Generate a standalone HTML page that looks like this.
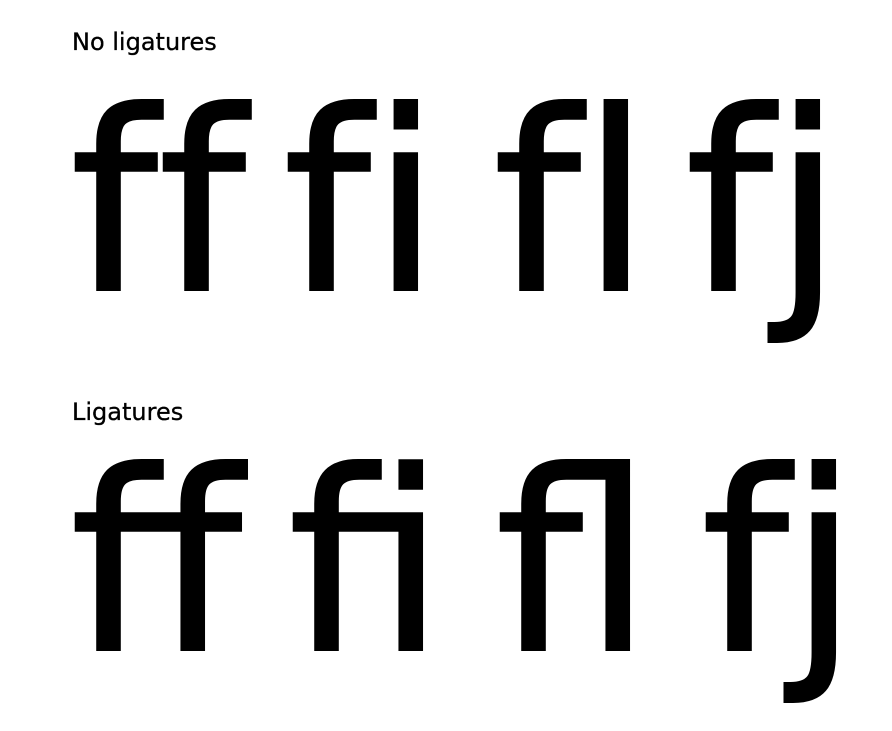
<!DOCTYPE html>
<html><head><meta charset="utf-8"><style>
html,body{margin:0;padding:0;background:#fff;width:892px;height:731px;overflow:hidden;position:relative}
.l{position:absolute;font-family:"DejaVu Sans","Liberation Sans",sans-serif;font-size:24px;font-weight:500;line-height:1;color:#000;left:72px;-webkit-text-stroke:0.3px #000}
.g{position:absolute;font-family:"DejaVu Sans","Liberation Sans",sans-serif;font-size:250px;line-height:1;color:#000;white-space:nowrap;-webkit-text-stroke:2px #000}
.n{font-variant-ligatures:none;font-feature-settings:"liga" 0}
.y{font-variant-ligatures:common-ligatures;font-feature-settings:"liga" 1}
</style></head><body>
<div class="l" style="top:30px">No ligatures</div>
<div class="g n" style="top:79px;left:70px">ff</div>
<div class="g n" style="top:79px;left:283px">fi</div>
<div class="g n" style="top:79px;left:493px">fl</div>
<div class="g n" style="top:79px;left:685px">fj</div>
<div class="l" style="top:400px">Ligatures</div>
<div class="g y" style="top:439px;left:70px">ff</div>
<div class="g y" style="top:439px;left:288px">fi</div>
<div class="g y" style="top:439px;left:495px">fl</div>
<div class="g y" style="top:439px;left:701px">fj</div>
</body></html>
